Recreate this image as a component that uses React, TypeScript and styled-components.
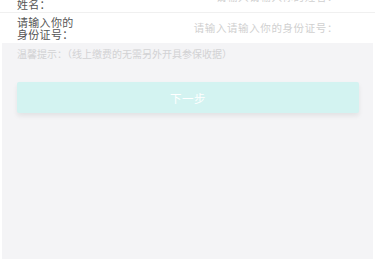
import React from "react";
import styled, { createGlobalStyle } from "styled-components";

const Global = createGlobalStyle`
  html, body { margin: 0; padding: 0; background: #ffffff; }
  body { font-family: "Noto Sans CJK SC", "Noto Sans", sans-serif; overflow: hidden; }
`;

const Page = styled.div`
  display: flex;
  flex-direction: column;
  height: 259px;
`;

const Form = styled.div`
  display: flex;
  flex-direction: column;
  margin-top: -17px;
  background: #ffffff;
`;

const Row = styled.div<{ $divider?: boolean }>`
  height: 30px;
  display: flex;
  align-items: center;
  justify-content: space-between;
  padding: 0 37px 0 17px;
  border-bottom: ${(p) => (p.$divider ? "1px solid #f0f0f0" : "none")};
  box-sizing: border-box;
`;

const Label = styled.div`
  height: 24px;
  width: 70px;
  display: flex;
  flex-direction: column;
  justify-content: flex-end;
  font-size: 11px;
  line-height: 12px;
  color: #555555;
  letter-spacing: 0.3px;
`;

const Placeholder = styled.div<{ $lift?: boolean }>`
  font-size: 10.5px;
  line-height: 12px;
  color: #d0d0d0;
  letter-spacing: 0.6px;
  margin-bottom: ${(p) => (p.$lift ? "2px" : "0")};
`;

const Panel = styled.div`
  flex: 1;
  margin: 0 2px;
  background: #f4f4f6;
  display: flex;
  flex-direction: column;
  padding: 5px 14px 0 15px;
`;

const Tip = styled.div`
  font-size: 10px;
  line-height: 12px;
  color: #d2d2d4;
`;

const NextButton = styled.button`
  margin-top: 22px;
  height: 31px;
  border: none;
  border-radius: 2px;
  background: #d3f3f1;
  color: #ffffff;
  font-family: "Noto Sans CJK SC", "Noto Sans", sans-serif;
  font-size: 11.5px;
  letter-spacing: 0.5px;
  box-shadow: 0 3px 5px rgba(0, 0, 0, 0.07);
  padding: 0;
`;

export default function App() {
  return (
    <>
      <Global />
      <Page>
        <Form>
          <Row $divider>
            <Label>
              <span>姓名：</span>
            </Label>
            <Placeholder $lift>请输入请输入你的姓名：</Placeholder>
          </Row>
          <Row>
            <Label>
              <span>请输入你的</span>
              <span>身份证号：</span>
            </Label>
            <Placeholder>请输入请输入你的身份证号：</Placeholder>
          </Row>
        </Form>
        <Panel>
          <Tip>温馨提示：（线上缴费的无需另外开具参保收据）</Tip>
          <NextButton>下一步</NextButton>
        </Panel>
      </Page>
    </>
  );
}
